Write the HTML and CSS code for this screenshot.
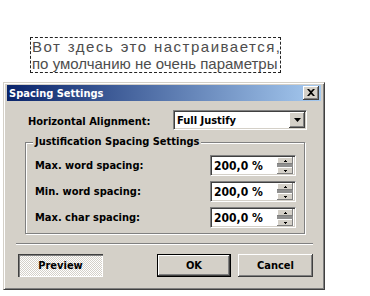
FILE: index.html
```html
<!DOCTYPE html>
<html lang="ru">
<head>
    <meta charset="UTF-8">
    <title>Spacing Settings</title>
    <link rel="stylesheet" href="styles.css">
</head>
<body>

    <!-- Note above the dialog -->
    <div class="note">
        <span class="note-line justify">Вот здесь это настраивается,</span>
        <span class="note-line">по умолчанию не очень параметры</span>
    </div>

    <!-- Dialog -->
    <div class="dialog">
        <div class="titlebar">
            <span class="title">Spacing Settings</span>
            <span class="close-btn">
                <svg width="8" height="7" viewBox="0 0 8 7"><path d="M0 0h2l2 2 2-2h2L5 3.5 8 7H6L4 5 2 7H0l3-3.5z" fill="#000"/></svg>
            </span>
        </div>

        <div class="dialog-body">
            <div class="align-row">
                <span class="label">Horizontal Alignment:</span>
                <div class="select">
                    <span class="select-value">Full Justify</span>
                    <span class="select-arrow">
                        <svg width="7" height="4" viewBox="0 0 7 4"><path d="M0 0h7L3.5 4z" fill="#000"/></svg>
                    </span>
                </div>
            </div>

            <div class="group">
                <span class="group-title">Justification Spacing Settings</span>
                <div class="spin-row">
                    <span class="label">Max. word spacing:</span>
                    <div class="spin">
                        <span class="spin-value">200,0 %</span>
                        <span class="spin-buttons">
                            <span class="spin-btn"><svg width="3" height="2" viewBox="0 0 3 2"><path d="M1 0h1v1h1v1H0V1h1z" fill="#000"/></svg></span>
                            <span class="spin-btn"><svg width="3" height="2" viewBox="0 0 3 2"><path d="M0 0h3v1H2v1H1V1H0z" fill="#000"/></svg></span>
                        </span>
                    </div>
                </div>
                <div class="spin-row">
                    <span class="label">Min. word spacing:</span>
                    <div class="spin">
                        <span class="spin-value">200,0 %</span>
                        <span class="spin-buttons">
                            <span class="spin-btn"><svg width="3" height="2" viewBox="0 0 3 2"><path d="M1 0h1v1h1v1H0V1h1z" fill="#000"/></svg></span>
                            <span class="spin-btn"><svg width="3" height="2" viewBox="0 0 3 2"><path d="M0 0h3v1H2v1H1V1H0z" fill="#000"/></svg></span>
                        </span>
                    </div>
                </div>
                <div class="spin-row">
                    <span class="label">Max. char spacing:</span>
                    <div class="spin">
                        <span class="spin-value">200,0 %</span>
                        <span class="spin-buttons">
                            <span class="spin-btn"><svg width="3" height="2" viewBox="0 0 3 2"><path d="M1 0h1v1h1v1H0V1h1z" fill="#000"/></svg></span>
                            <span class="spin-btn"><svg width="3" height="2" viewBox="0 0 3 2"><path d="M0 0h3v1H2v1H1V1H0z" fill="#000"/></svg></span>
                        </span>
                    </div>
                </div>
            </div>

            <div class="separator"></div>

            <div class="button-row">
                <button class="btn btn-preview">Preview</button>
                <div class="button-group">
                    <button class="btn btn-default">OK</button>
                    <button class="btn btn-cancel">Cancel</button>
                </div>
            </div>
        </div>
    </div>

</body>
</html>
```

FILE: styles.css
```css
body {
    margin: 0;
    padding: 0;
    background-color: #fff;
    font-family: 'DejaVu Sans Condensed', 'DejaVu Sans', Tahoma, sans-serif;
}

/* note above the dialog */
.note {
    margin: 37px 0 0 30px;
    width: 251px;
    box-sizing: border-box;
    border: 1px dashed #222;
    font-family: 'Liberation Sans', Arial, sans-serif;
    font-size: 15px;
    line-height: 17px;
    color: #4d4d4d;
    padding-left: 1px;
}

.note-line {
    display: block;
    white-space: nowrap;
}

.note-line.justify {
    white-space: normal;
    letter-spacing: 1.5px;
    margin-right: -1.5px;
    text-align: justify;
    text-align-last: justify;
}

/* dialog window */
.dialog {
    margin: 9px 0 0 3px;
    width: 322px;
    height: 208px;
    box-sizing: border-box;
    background-color: #d4d0c8;
    border: 1px solid;
    border-color: #d4d0c8 #404040 #404040 #d4d0c8;
    box-shadow: inset 1px 1px 0 #fff, inset -1px -1px 0 #808080;
    padding: 2px 3px 3px 3px;
}

.titlebar {
    height: 16px;
    background: linear-gradient(to right, #0a246a, #a6caf0);
    display: flex;
    align-items: center;
    justify-content: space-between;
    padding: 0 2px 0 2px;
}

.title {
    color: #fff;
    font-weight: bold;
    font-size: 11px;
}

.close-btn {
    width: 16px;
    height: 14px;
    box-sizing: border-box;
    background-color: #d4d0c8;
    box-shadow: inset -1px -1px 0 #404040, inset 1px 1px 0 #fff, inset -2px -2px 0 #808080;
    display: flex;
    align-items: center;
    justify-content: center;
    padding: 0 1px 1px 0;
}

.dialog-body {
    padding-top: 9px;
    font-size: 11px;
    font-weight: bold;
    color: #000;
}

.label {
    white-space: nowrap;
}

.align-row {
    display: flex;
    align-items: center;
    justify-content: space-between;
    margin: 0 14px 0 21px;
    height: 20px;
}

.align-row .label {
    padding-top: 2px;
}

.select {
    width: 134px;
    height: 20px;
    box-sizing: border-box;
    background-color: #fff;
    border: 1px solid;
    border-color: #808080 #fff #fff #808080;
    box-shadow: inset 1px 1px 0 #404040, inset -1px -1px 0 #d4d0c8;
    display: flex;
    align-items: center;
    justify-content: space-between;
    padding: 0 1px 0 3px;
}

.select-arrow {
    width: 16px;
    height: 16px;
    box-sizing: border-box;
    background-color: #d4d0c8;
    box-shadow: inset -1px -1px 0 #404040, inset 1px 1px 0 #fff, inset -2px -2px 0 #808080;
    display: flex;
    align-items: center;
    justify-content: center;
}

/* group box */
.group {
    position: relative;
    margin: 12px 0 0 18px;
    width: 280px;
    height: 92px;
    box-sizing: border-box;
    padding: 12px 8px 0 9px;
    border: 1px solid #808080;
    box-shadow: 1px 1px 0 #fff, inset 1px 1px 0 #fff;
    display: flex;
    flex-direction: column;
    gap: 5px;
}

.group-title {
    position: absolute;
    top: -8px;
    left: 7px;
    padding: 0 2px;
    background-color: #d4d0c8;
    line-height: 14px;
}

.spin-row {
    display: flex;
    align-items: center;
    justify-content: space-between;
    height: 21px;
}

.spin {
    width: 86px;
    height: 21px;
    box-sizing: border-box;
    background-color: #fff;
    border: 1px solid;
    border-color: #808080 #fff #fff #808080;
    box-shadow: inset 1px 1px 0 #404040, inset -1px -1px 0 #d4d0c8;
    display: flex;
    align-items: center;
    justify-content: space-between;
    padding: 0 2px 0 3px;
    font-size: 12px;
}

.spin-buttons {
    width: 16px;
    height: 17px;
    display: flex;
    flex-direction: column;
    justify-content: space-between;
    background-color: #909090;
}

.spin-btn {
    height: 7px;
    background-color: #d4d0c8;
    box-shadow: inset -1px -1px 0 #808080, inset 1px 1px 0 #fff;
    display: flex;
    align-items: center;
    justify-content: center;
}

.separator {
    margin: 9px 0 0 9px;
    width: 297px;
    border-top: 1px solid #808080;
    border-bottom: 1px solid #fff;
}

/* buttons */
.button-row {
    display: flex;
    justify-content: space-between;
    margin: 9px 8px 0 11px;
}

.button-group {
    display: flex;
    gap: 7px;
}

.btn {
    width: 75px;
    height: 23px;
    box-sizing: border-box;
    font-family: 'DejaVu Sans Condensed', 'DejaVu Sans', Tahoma, sans-serif;
    font-size: 11px;
    font-weight: bold;
    color: #000;
    background-color: #d4d0c8;
    border: none;
    box-shadow: inset -1px -1px 0 #404040, inset 1px 1px 0 #fff, inset -2px -2px 0 #808080;
    padding: 0;
}

.btn-default {
    width: 74px;
    border: 1px solid #000;
}

.btn-preview {
    width: 85px;
    background-color: #e6e4e0;
    background-image: repeating-conic-gradient(#fff 0 25%, #d4d0c8 0 50%);
    background-size: 2px 2px;
    box-shadow: inset 1px 1px 0 #404040, inset 2px 2px 0 #808080, inset -1px -1px 0 #fff;
}
```
